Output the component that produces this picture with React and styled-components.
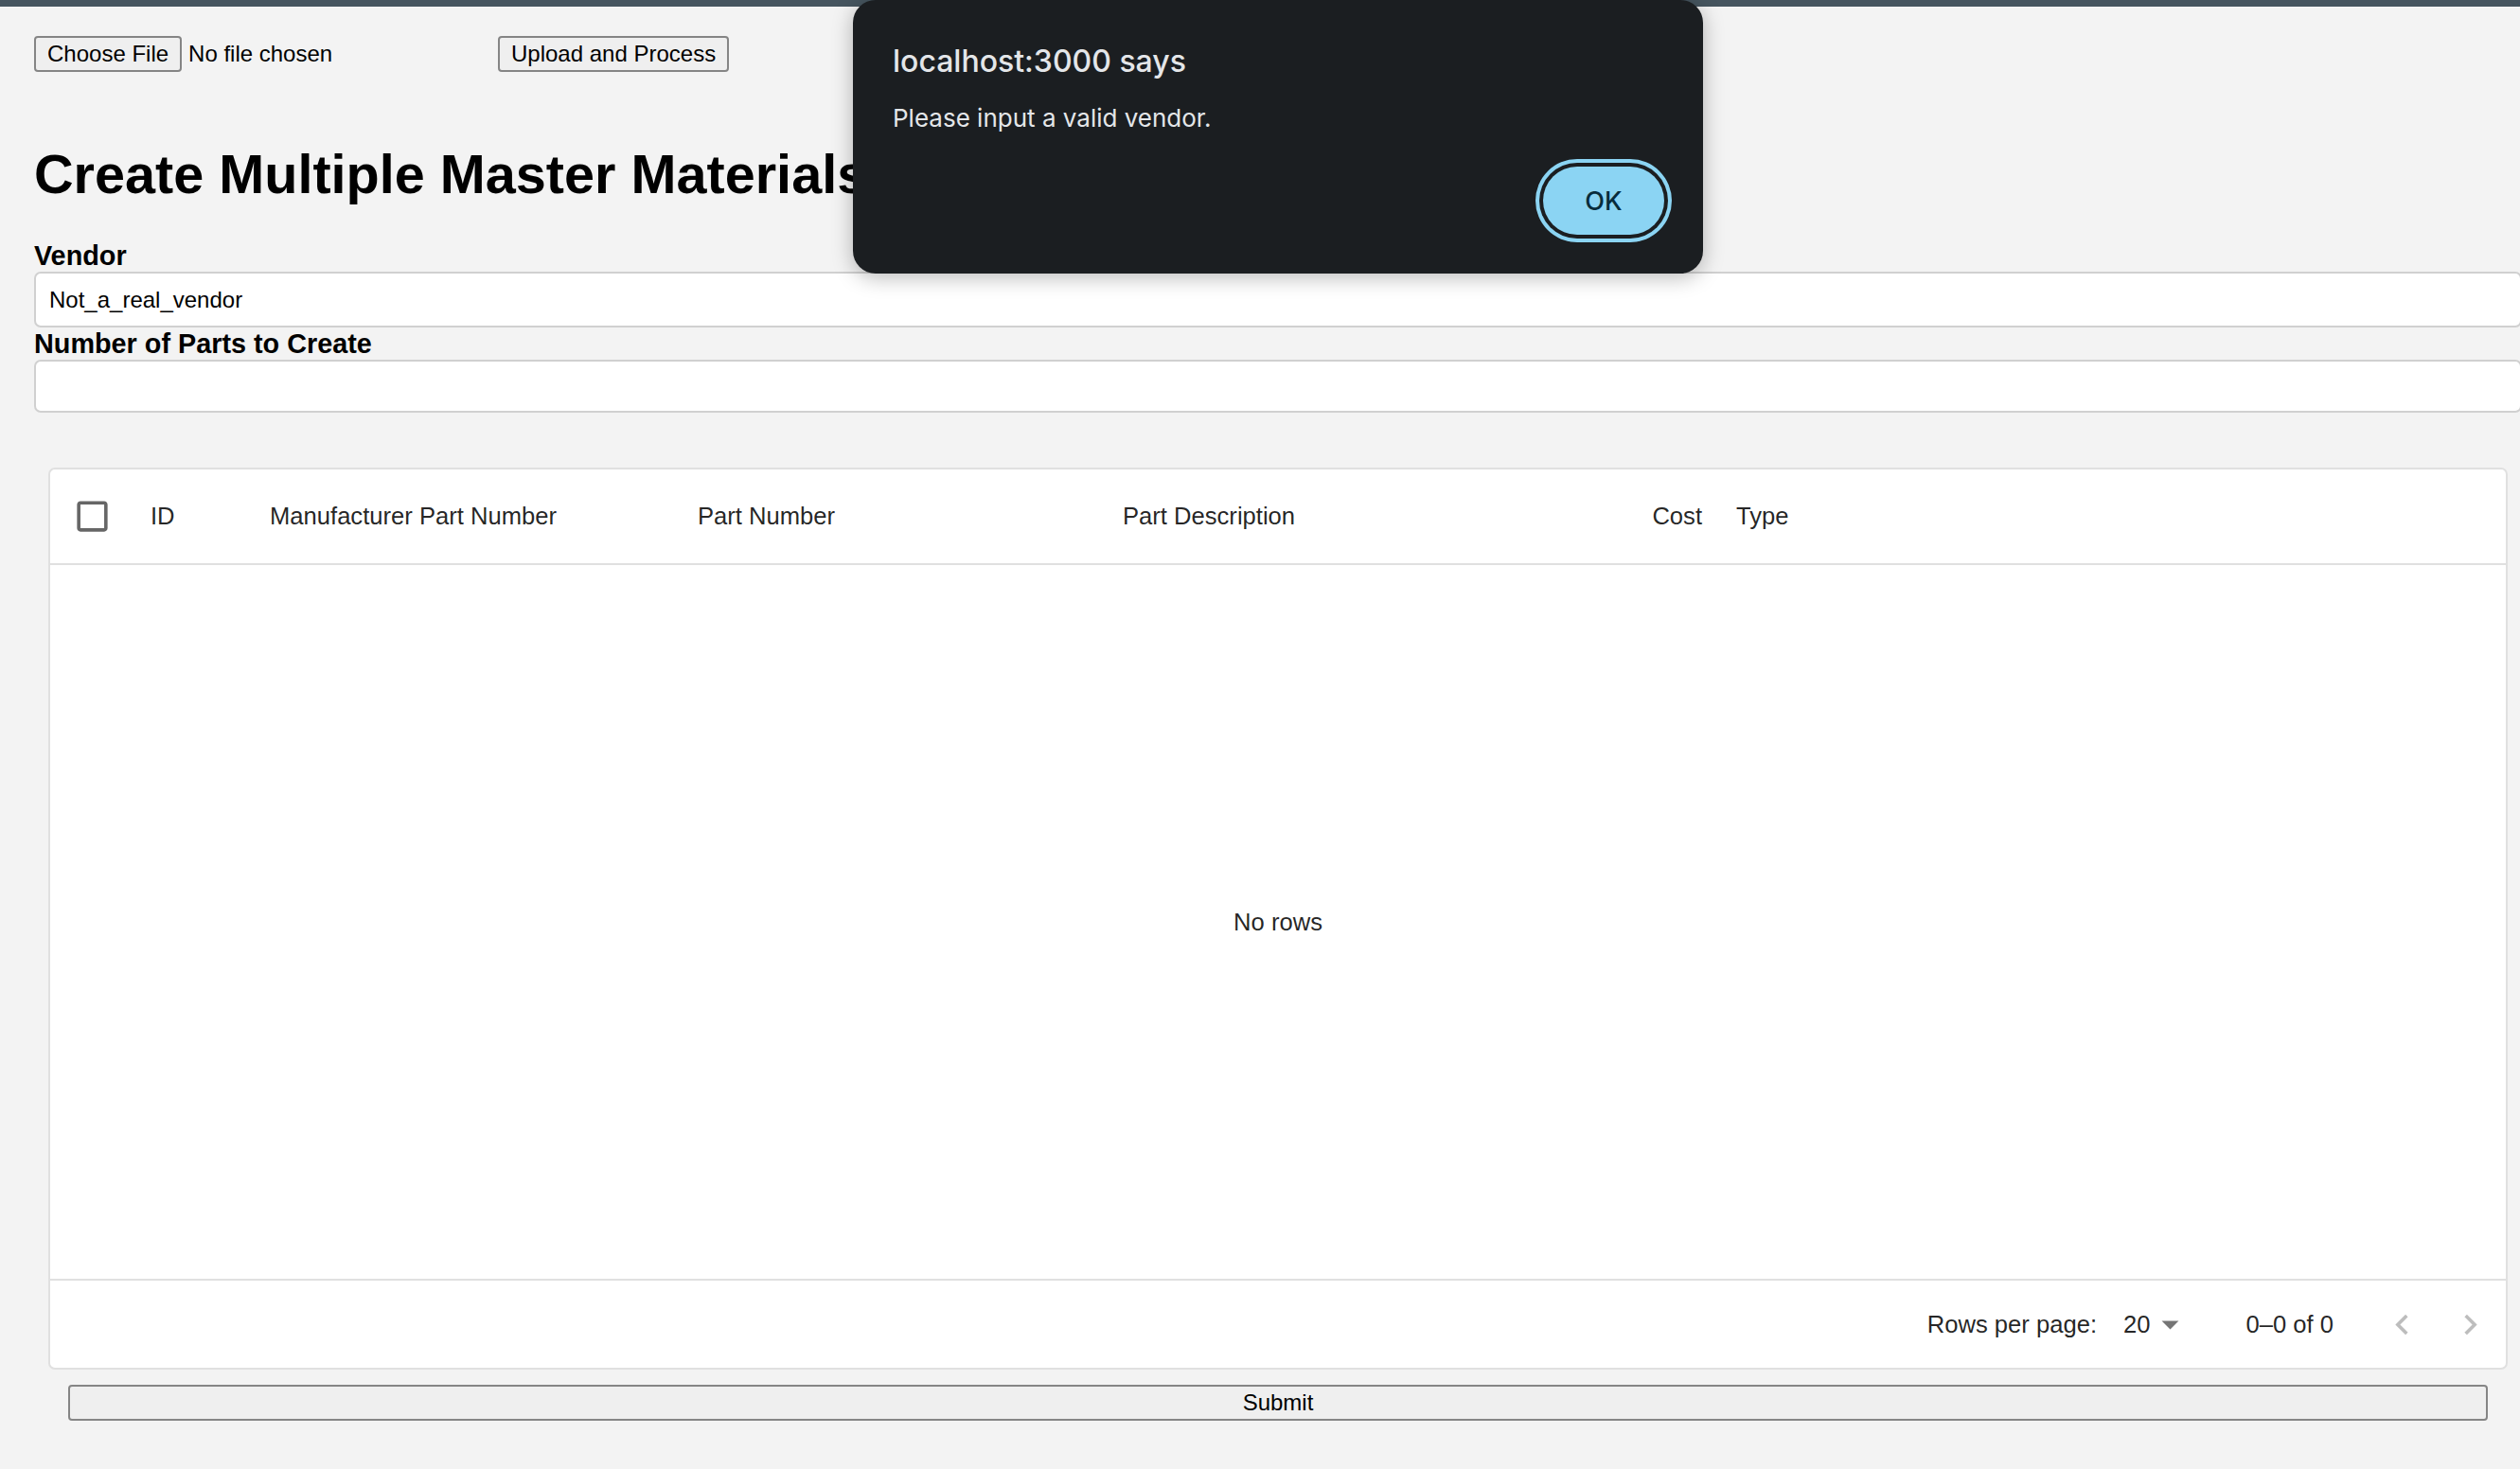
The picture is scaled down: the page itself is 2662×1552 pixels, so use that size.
import React from 'react';
import styled, { createGlobalStyle } from 'styled-components';

const GlobalStyle = createGlobalStyle`
  html, body {
    margin: 0;
    padding: 0;
    background: #f3f3f3;
    overflow: hidden;
  }
  body {
    font-family: "Liberation Sans", Arial, Helvetica, sans-serif;
    color: #000;
  }
  * {
    box-sizing: border-box;
  }
`;

const Page = styled.div`
  position: relative;
  width: 100%;
  min-height: 1552px;
  overflow: hidden;
`;

const TopBar = styled.div`
  height: 7px;
  background: #46555f;
`;

const Content = styled.div`
  margin-left: 36px;
  width: 2628px;
  display: flex;
  flex-direction: column;
`;

// file upload row
const FileRow = styled.div`
  margin-top: 31px;
  display: flex;
  align-items: center;
  height: 38px;
`;

const FilePicker = styled.div`
  width: 490px;
  display: flex;
  align-items: center;
  gap: 7px;
`;

const NativeButton = styled.button`
  height: 38px;
  padding: 0 12px;
  border: 2px solid #858585;
  border-radius: 4px;
  background: #efefef;
  font-family: "Liberation Sans", Arial, sans-serif;
  font-size: 24px;
  color: #000;
  white-space: nowrap;
`;

const FileName = styled.span`
  font-size: 24px;
  white-space: nowrap;
`;

const Title = styled.h1`
  margin: 75px 0 37px;
  font-size: 57.6px;
  line-height: 66px;
  font-weight: 700;
  white-space: nowrap;
`;

const FieldLabel = styled.label`
  display: block;
  font-size: 28.8px;
  font-weight: 700;
  line-height: ${(p) => p.$lh}px;
`;

const TextInput = styled.input`
  display: block;
  width: 100%;
  height: ${(p) => p.$h}px;
  padding: 0 14px;
  border: 2px solid #d0d0d0;
  border-radius: 7px;
  background: #fff;
  font-family: "Liberation Sans", Arial, sans-serif;
  font-size: 24px;
  color: #000;
  outline: none;
`;

// data grid
const Grid = styled.div`
  margin: 58px 15px 0;
  height: 953px;
  display: flex;
  flex-direction: column;
  background: #fff;
  border: 2px solid #e0e0e0;
  border-radius: 7px;
  font-size: 25.6px;
  color: rgba(0, 0, 0, 0.87);
`;

const HeaderRow = styled.div`
  height: 101px;
  display: grid;
  grid-template-columns: 88px 126px 452px 449px 468px 180px 180px 1fr;
  border-bottom: 2px solid #e0e0e0;
`;

const HeaderCell = styled.div`
  display: flex;
  align-items: center;
  justify-content: ${(p) => (p.$align === 'right' ? 'flex-end' : 'flex-start')};
  padding: 0 18px;
  white-space: nowrap;
`;

const CheckCell = styled.div`
  display: flex;
  align-items: center;
  justify-content: center;
`;

const GridBody = styled.div`
  flex: 1;
  display: flex;
  align-items: center;
  justify-content: center;
`;

const GridFooter = styled.div`
  height: 94px;
  border-top: 2px solid #e0e0e0;
  display: flex;
  align-items: center;
  justify-content: flex-end;
  padding-right: 2px;
`;

const SelectBox = styled.div`
  position: relative;
  margin: 0 58px 0 14px;
  padding: 0 43px 0 14px;
  display: flex;
  align-items: center;

  svg {
    position: absolute;
    right: 0;
    top: 50%;
    transform: translateY(-50%);
  }
`;

const PageActions = styled.div`
  margin-left: 36px;
  display: flex;
`;

const IconButton = styled.div`
  width: 72px;
  height: 72px;
  display: flex;
  align-items: center;
  justify-content: center;
`;

const SubmitButton = styled(NativeButton)`
  margin: 16px 36px 0;
  width: 2556px;
`;

// browser alert
const AlertDialog = styled.div`
  position: absolute;
  left: 901px;
  top: 0;
  width: 898px;
  height: 289px;
  padding: 47px 41px 41px 42px;
  display: flex;
  flex-direction: column;
  background: #1b1e21;
  border-radius: 24px;
  box-shadow: 0 4px 22px rgba(0, 0, 0, 0.28);
  font-family: Inter, "Noto Sans", sans-serif;
  color: #e4e6e9;
`;

const AlertTitle = styled.div`
  font-size: 32px;
  font-weight: 500;
  line-height: 36px;
`;

const AlertMessage = styled.div`
  margin-top: 26px;
  font-size: 26px;
  line-height: 32px;
`;

const AlertActions = styled.div`
  margin-top: auto;
  display: flex;
  justify-content: flex-end;
`;

const OkButton = styled.button`
  width: 128px;
  height: 72px;
  border: none;
  border-radius: 36px;
  background: #8bd4f3;
  color: #082c3b;
  font-family: Inter, "Noto Sans", sans-serif;
  font-size: 27px;
  font-weight: 500;
  box-shadow: 0 0 0 4px #1b1e21, 0 0 0 8px #8bd4f3;
`;

const CheckboxIcon = () => (
  <svg width="43" height="43" viewBox="0 0 24 24" fill="rgba(0,0,0,0.6)">
    <path d="M19 5v14H5V5h14m0-2H5c-1.11 0-2 .9-2 2v14c0 1.1.89 2 2 2h14c1.1 0 2-.9 2-2V5c0-1.1-.9-2-2-2z" />
  </svg>
);

const DropIcon = () => (
  <svg width="43" height="43" viewBox="0 0 24 24" fill="rgba(0,0,0,0.54)">
    <path d="M7 10l5 5 5-5z" />
  </svg>
);

const ChevronLeft = () => (
  <svg width="43" height="43" viewBox="0 0 24 24" fill="rgba(0,0,0,0.26)">
    <path d="M15.41 16.59 10.83 12l4.58-4.59L14 6l-6 6 6 6 1.41-1.41z" />
  </svg>
);

const ChevronRight = () => (
  <svg width="43" height="43" viewBox="0 0 24 24" fill="rgba(0,0,0,0.26)">
    <path d="M8.59 16.59 13.17 12 8.59 7.41 10 6l6 6-6 6-1.41-1.41z" />
  </svg>
);

const columns = [
  { field: 'id', label: 'ID' },
  { field: 'mpn', label: 'Manufacturer Part Number' },
  { field: 'pn', label: 'Part Number' },
  { field: 'desc', label: 'Part Description' },
  { field: 'cost', label: 'Cost', align: 'right' },
  { field: 'type', label: 'Type' },
];

const App = () => (
  <>
    <GlobalStyle />
    <Page>
      <TopBar />
      <Content>
        <FileRow>
          <FilePicker>
            <NativeButton>Choose File</NativeButton>
            <FileName>No file chosen</FileName>
          </FilePicker>
          <NativeButton>Upload and Process</NativeButton>
        </FileRow>

        <Title>Create Multiple Master Materials</Title>

        <FieldLabel $lh={33}>Vendor</FieldLabel>
        <TextInput $h={59} defaultValue="Not_a_real_vendor" />
        <FieldLabel $lh={34}>Number of Parts to Create</FieldLabel>
        <TextInput $h={56} type="text" />

        <Grid>
          <HeaderRow>
            <CheckCell>
              <CheckboxIcon />
            </CheckCell>
            {columns.map((col) => (
              <HeaderCell key={`col_${col.field}`} $align={col.align}>
                {col.label}
              </HeaderCell>
            ))}
          </HeaderRow>
          <GridBody>No rows</GridBody>
          <GridFooter>
            <span>Rows per page:</span>
            <SelectBox>
              <span>20</span>
              <DropIcon />
            </SelectBox>
            <span>0–0 of 0</span>
            <PageActions>
              <IconButton>
                <ChevronLeft />
              </IconButton>
              <IconButton>
                <ChevronRight />
              </IconButton>
            </PageActions>
          </GridFooter>
        </Grid>

        <SubmitButton>Submit</SubmitButton>
      </Content>

      <AlertDialog>
        <AlertTitle>localhost:3000 says</AlertTitle>
        <AlertMessage>Please input a valid vendor.</AlertMessage>
        <AlertActions>
          <OkButton>OK</OkButton>
        </AlertActions>
      </AlertDialog>
    </Page>
  </>
);

export default App;
